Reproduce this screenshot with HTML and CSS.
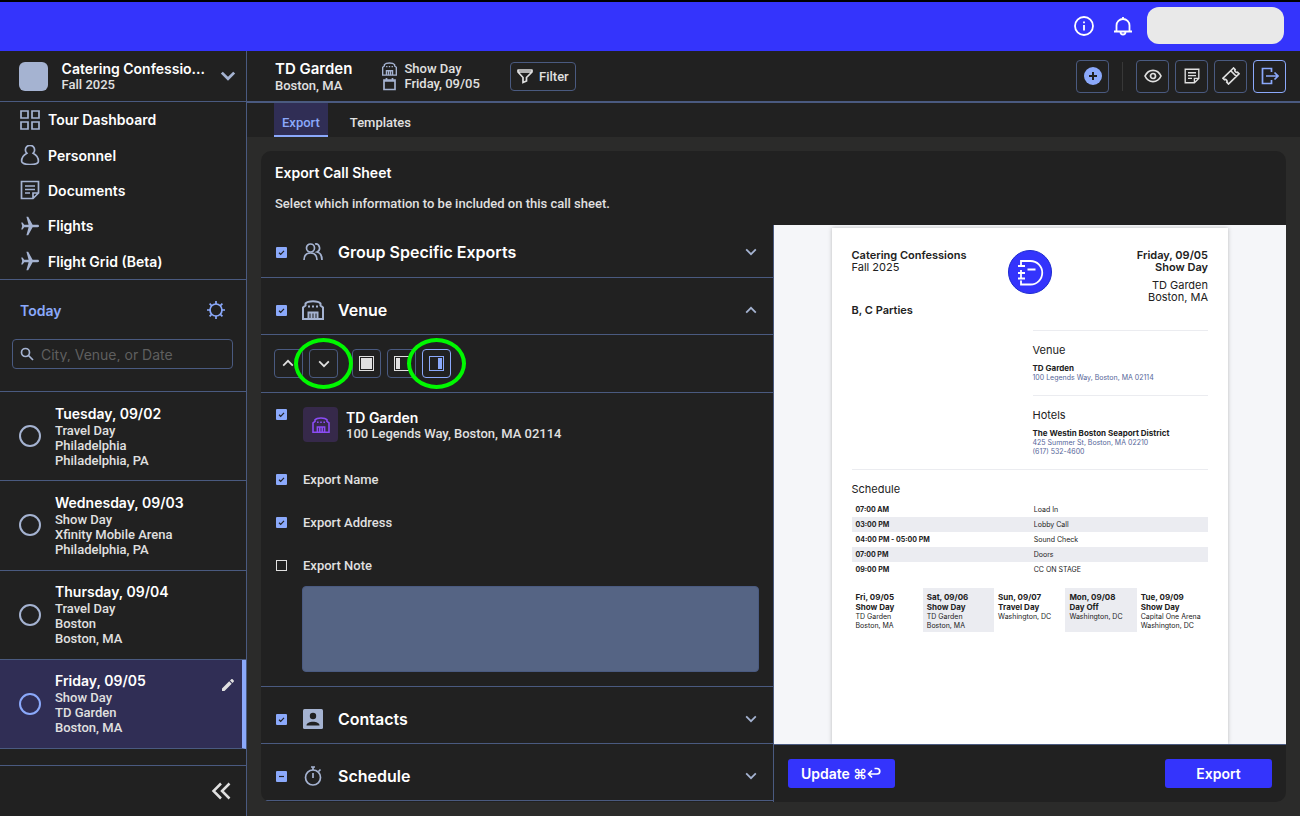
FILE: index.html
```html
<!DOCTYPE html>
<html lang="en">

<head>
    <meta charset="UTF-8">
    <meta name="viewport" content="width=device-width, initial-scale=1.0">
    <title>Export Call Sheet - TD Garden</title>
    <link rel="stylesheet" href="styles.css">
</head>

<body>
    <!-- shared icons -->
    <svg class="sprite" aria-hidden="true">
        <symbol id="i-chevron" viewBox="0 0 16 16"><path d="M2.5 5L8 10.500l5.500-5.500"/></symbol>
        <symbol id="i-plane" viewBox="0 0 20 20"><path class="solid" d="M19 10c0-.8-.6-1.200-1.400-1.200h-5L8.200.8H6.400l2.200 8H4.200L2.600 6.600H1.200L2.200 10l-1 3.400h1.400l1.600-2.200h4.400l-2.200 8h1.800l4.400-8h5c.8 0 1.400-.4 1.400-1.200z"/></symbol>
        <symbol id="i-note" viewBox="0 0 20 20"><path d="M1.500 1.500h17v11.500l-5.500 5.500H1.500zM18.500 13h-5.500v5.500M5 6h10M5 9.500h10M5 13h5"/></symbol>
        <symbol id="i-arena" viewBox="0 0 22 20"><path d="M1 19V7.500l2.500-2V3.500C6 .5 16 .5 18.500 3.500v2l2.500 2V19zM6.500 19v-6.500h9V19M9.500 13v6M12.500 13v6"/><path d="M6 6.500h2M10 6.500h2M14 6.500h2"/></symbol>
    </svg>

    <header class="topbar">
        <button class="topbar-btn" aria-label="Information">
            <svg class="icon" width="20" height="20" viewBox="0 0 20 20"><circle cx="10" cy="10" r="9"/><path d="M10 9v5.500M10 5.500v1.800"/></svg>
        </button>
        <button class="topbar-btn" aria-label="Notifications">
            <svg class="icon" width="20" height="20" viewBox="0 0 20 20"><path d="M1 15.500h18M3.500 15.500V9.500a6.500 6.500 0 0 1 13 0v6M10 3V1M7.500 16a2.500 2.500 0 0 0 5 0"/></svg>
        </button>
        <div class="account"></div>
    </header>

    <div class="layout">
        <aside class="sidebar">
            <button class="tour">
                <span class="tour-logo"></span>
                <span class="tour-text">
                    <strong>Catering Confessio...</strong>
                    <span>Fall 2025</span>
                </span>
                <svg class="icon thick" width="18" height="18"><use href="#i-chevron"/></svg>
            </button>

            <nav class="menu">
                <a href="#"><svg class="icon" width="20" height="20" viewBox="0 0 20 20"><path d="M1 1h7v7H1zM12 1h7v7h-7zM1 12h7v7H1zM12 12h7v7h-7z"/></svg>Tour Dashboard</a>
                <a href="#"><svg class="icon" width="20" height="20" viewBox="0 0 20 20"><path d="M6.800 8.200a4.600 4.600 0 1 1 6.400 0c3 1.600 5.200 5 5.200 8 0 2-3.400 3.300-8.400 3.300s-8.400-1.300-8.400-3.300c0-3 2.200-6.400 5.200-8z"/></svg>Personnel</a>
                <a href="#"><svg class="icon" width="20" height="20"><use href="#i-note"/></svg>Documents</a>
                <a href="#"><svg class="icon" width="20" height="20"><use href="#i-plane"/></svg>Flights</a>
                <a href="#"><svg class="icon" width="20" height="20"><use href="#i-plane"/></svg>Flight Grid (Beta)</a>
            </nav>

            <section class="finder">
                <div class="finder-head">
                    <a href="#">Today</a>
                    <button aria-label="Theme">
                        <svg class="icon" width="18" height="18" viewBox="0 0 18 18"><circle cx="9" cy="9" r="6"/><path d="M9 0v3M9 15v3M0 9h3M15 9h3M2.600 2.600l2 2M13.400 13.400l2 2M2.600 15.400l2-2M13.400 4.600l2-2"/></svg>
                    </button>
                </div>
                <div class="search">
                    <svg class="icon" width="14" height="14" viewBox="0 0 14 14"><circle cx="5.500" cy="5.500" r="4"/><path d="M8.500 8.500L13 13"/></svg>
                    <input type="text" aria-label="Search dates" placeholder="City, Venue, or Date">
                </div>
            </section>

            <ul class="days">
                <li class="day">
                    <span class="day-dot"></span>
                    <div><strong>Tuesday, 09/02</strong><p>Travel Day</p><p>Philadelphia</p><p>Philadelphia, PA</p></div>
                </li>
                <li class="day">
                    <span class="day-dot"></span>
                    <div><strong>Wednesday, 09/03</strong><p>Show Day</p><p>Xfinity Mobile Arena</p><p>Philadelphia, PA</p></div>
                </li>
                <li class="day">
                    <span class="day-dot"></span>
                    <div><strong>Thursday, 09/04</strong><p>Travel Day</p><p>Boston</p><p>Boston, MA</p></div>
                </li>
                <li class="day active">
                    <span class="day-dot"></span>
                    <div><strong>Friday, 09/05</strong><p>Show Day</p><p>TD Garden</p><p>Boston, MA</p></div>
                    <button class="edit" aria-label="Edit day">
                        <svg width="12" height="12" viewBox="0 0 12 12"><path fill="#e0e0e0" d="M0 9.500L7.200 2.300l2.500 2.500L2.500 12H0zM8 1.500L9.300.3c.4-.4.900-.4 1.300 0l1.100 1.100c.4.4.4.900 0 1.300L10.500 4z"/></svg>
                    </button>
                </li>
            </ul>

            <div class="sidebar-foot">
                <button aria-label="Collapse sidebar">
                    <svg class="icon thick" width="20" height="18" viewBox="0 0 20 18"><path d="M10 1.500L2.500 9l7.500 7.500M18.500 1.500L11 9l7.500 7.500"/></svg>
                </button>
            </div>
        </aside>

        <main class="main">
            <div class="event-bar">
                <div class="event-name">
                    <h1>TD Garden</h1>
                    <p>Boston, MA</p>
                </div>
                <div class="event-info">
                    <p><svg class="icon arena" width="15" height="14"><use href="#i-arena"/></svg>Show Day</p>
                    <p><svg class="icon" width="15" height="14" viewBox="0 0 15 14"><path d="M2 3h11v9.500H2zM2 4h11M4.500 1v2M10.500 1v2"/></svg>Friday, 09/05</p>
                </div>
                <button class="filter">
                    <svg class="icon" width="16" height="16" viewBox="0 0 16 16"><path d="M1 2h14M1.500 4h13M1 1.500v2.500l5 5.500v5l3.500-1.500V9.500l5.500-5.500V1.500"/></svg>
                    Filter
                </button>
                <div class="actions">
                    <button aria-label="Add">
                        <svg width="18" height="18" viewBox="0 0 18 18"><circle cx="9" cy="9" r="9" fill="#8ba9fb"/><path d="M9 5v8M5 9h8" stroke="#212121" stroke-width="2"/></svg>
                    </button>
                    <span class="divider"></span>
                    <button aria-label="Preview">
                        <svg class="icon" width="18" height="18" viewBox="0 0 18 18"><path d="M1 9C4.500 1.500 13.500 1.500 17 9 13.500 16.500 4.500 16.500 1 9z"/><circle cx="9" cy="9" r="2.500"/></svg>
                    </button>
                    <button aria-label="Notes"><svg class="icon" width="16" height="16"><use href="#i-note"/></svg></button>
                    <button aria-label="Tickets">
                        <svg class="icon" width="18" height="18" viewBox="0 0 18 18"><path d="M11.500 1L1 11.200l1.500 1.500c1.300-.8 3.200 1 2.300 2.500L6.500 17 17 6.800l-1.500-1.600c-1.500.7-3.200-1-2.400-2.500zM9 4l5.500 5.500"/></svg>
                    </button>
                    <button class="on" aria-label="Export">
                        <svg class="icon" width="18" height="18" viewBox="0 0 18 18"><path d="M10.500 5V1.500h-9v15h9V13M5 9h12M13.500 5.500L17 9l-3.500 3.500"/></svg>
                    </button>
                </div>
            </div>

            <nav class="tabs">
                <a href="#" class="active">Export</a>
                <a href="#">Templates</a>
            </nav>

            <div class="card">
                <div class="card-head">
                    <h2>Export Call Sheet</h2>
                    <p>Select which information to be included on this call sheet.</p>
                </div>

                <div class="options">
                    <div class="section-row first">
                        <input type="checkbox" id="c-group" checked>
                        <svg class="icon" width="22" height="20" viewBox="0 0 22 20"><circle cx="8.500" cy="6" r="4"/><path d="M2 18c0-4 1.500-7 6.500-7s6.500 3 6.500 7M13 2c4.500-.8 6.500 6 2 8 3.500.8 5 3.500 5 8"/></svg>
                        <label for="c-group">Group Specific Exports</label>
                        <button aria-label="Expand"><svg class="icon" width="14" height="14"><use href="#i-chevron"/></svg></button>
                    </div>
                    <div class="section-row">
                        <input type="checkbox" id="c-venue" checked>
                        <svg class="icon arena" width="22" height="20"><use href="#i-arena"/></svg>
                        <label for="c-venue">Venue</label>
                        <button class="up" aria-label="Collapse"><svg class="icon" width="14" height="14"><use href="#i-chevron"/></svg></button>
                    </div>

                    <div class="toolbar">
                        <button class="up" aria-label="Move up"><svg class="icon" width="14" height="14"><use href="#i-chevron"/></svg></button>
                        <button class="marked" aria-label="Move down"><svg class="icon" width="14" height="14"><use href="#i-chevron"/></svg></button>
                        <span class="gap"></span>
                        <button aria-label="Full width"><span class="pane full"></span></button>
                        <button aria-label="Left half"><span class="pane left"></span></button>
                        <button class="on marked" aria-label="Right half"><span class="pane right"></span></button>
                    </div>

                    <div class="venue">
                        <div class="venue-row place">
                            <input type="checkbox" id="c-td" checked>
                            <span class="venue-icon"><svg class="icon arena" width="18" height="16"><use href="#i-arena"/></svg></span>
                            <label for="c-td"><strong>TD Garden</strong><span>100 Legends Way, Boston, MA 02114</span></label>
                        </div>
                        <div class="venue-row">
                            <input type="checkbox" id="c-name" checked>
                            <label for="c-name">Export Name</label>
                        </div>
                        <div class="venue-row">
                            <input type="checkbox" id="c-address" checked>
                            <label for="c-address">Export Address</label>
                        </div>
                        <div class="venue-row">
                            <input type="checkbox" id="c-note">
                            <label for="c-note">Export Note</label>
                        </div>
                        <textarea aria-label="Note"></textarea>
                    </div>

                    <div class="section-row">
                        <input type="checkbox" id="c-contacts" checked>
                        <svg width="22" height="20" viewBox="0 0 22 20"><rect x="1" width="20" height="20" rx="1.500" fill="#a5b3d1"/><circle cx="11" cy="7" r="3.200" fill="#212121"/><path d="M4.500 16.500c0-5 13-5 13 0z" fill="#212121"/></svg>
                        <label for="c-contacts">Contacts</label>
                        <button aria-label="Expand"><svg class="icon" width="14" height="14"><use href="#i-chevron"/></svg></button>
                    </div>
                    <div class="section-row">
                        <input type="checkbox" id="c-schedule" class="partial" checked>
                        <svg class="icon" width="22" height="20" viewBox="0 0 22 20"><circle cx="11" cy="11.500" r="7.500"/><path d="M11 7v5M9 1h4M11 1v3M16.500 5.500l2-2"/></svg>
                        <label for="c-schedule">Schedule</label>
                        <button aria-label="Expand"><svg class="icon" width="14" height="14"><use href="#i-chevron"/></svg></button>
                    </div>
                </div>

                <div class="preview">
                    <article class="sheet">
                        <div class="sheet-head">
                            <div>
                                <strong>Catering Confessions</strong>
                                <p>Fall 2025</p>
                            </div>
                            <svg width="46" height="46" viewBox="0 0 46 46"><circle cx="23" cy="23" r="21.500" fill="#3434fc" stroke="#1c2ad0"/><path fill="none" stroke="#fff" stroke-width="1.800" d="M14 16v-4h9.500a11 11 0 0 1 0 23.500H14v-4M11 17h7M14 21v6M11 24h7M11 29.500h7M14 29.500v-3M20.500 20.500h8"/></svg>
                            <div class="sheet-date">
                                <strong>Friday, 09/05</strong>
                                <strong>Show Day</strong>
                                <p class="spaced">TD Garden</p>
                                <p>Boston, MA</p>
                            </div>
                        </div>
                        <strong class="parties">B, C Parties</strong>

                        <div class="sheet-half">
                            <h3>Venue</h3>
                            <strong>TD Garden</strong>
                            <p>100 Legends Way, Boston, MA 02114</p>
                        </div>
                        <div class="sheet-half">
                            <h3>Hotels</h3>
                            <strong>The Westin Boston Seaport District</strong>
                            <p>425 Summer St, Boston, MA 02210</p>
                            <p>(617) 532-4600</p>
                        </div>

                        <div class="sheet-schedule">
                            <h3>Schedule</h3>
                            <table>
                                <tr><th>07:00 AM</th><td>Load In</td></tr>
                                <tr><th>03:00 PM</th><td>Lobby Call</td></tr>
                                <tr><th>04:00 PM - 05:00 PM</th><td>Sound Check</td></tr>
                                <tr><th>07:00 PM</th><td>Doors</td></tr>
                                <tr><th>09:00 PM</th><td>CC ON STAGE</td></tr>
                            </table>
                        </div>

                        <div class="week">
                            <div><strong>Fri, 09/05</strong><strong>Show Day</strong><p>TD Garden</p><p>Boston, MA</p></div>
                            <div><strong>Sat, 09/06</strong><strong>Show Day</strong><p>TD Garden</p><p>Boston, MA</p></div>
                            <div><strong>Sun, 09/07</strong><strong>Travel Day</strong><p>Washington, DC</p></div>
                            <div><strong>Mon, 09/08</strong><strong>Day Off</strong><p>Washington, DC</p></div>
                            <div><strong>Tue, 09/09</strong><strong>Show Day</strong><p>Capital One Arena</p><p>Washington, DC</p></div>
                        </div>
                    </article>
                </div>

                <div class="card-foot">
                    <button class="btn">Update ⌘<svg class="icon" width="14" height="14" viewBox="0 0 14 14"><path d="M5 3.500L1.500 7 5 10.500M1.500 7H10a2.700 2.700 0 0 0 0-5.500H7.500"/></svg></button>
                    <button class="btn">Export</button>
                </div>
            </div>
        </main>
    </div>
</body>

</html>
```

FILE: styles.css
```css
* {
    box-sizing: border-box;
}

body {
    margin: 0;
    min-height: 100vh;
    display: flex;
    flex-direction: column;
    background: #2b2b2a;
    color: #e0e0e0;
    font-family: Roboto, "Liberation Sans", sans-serif;
    font-size: 13px;
    font-weight: 500;
    line-height: 15px;
}

h1, h2, h3, p, ul {
    margin: 0;
    padding: 0;
    font-weight: inherit;
}

strong {
    display: block;
    font-weight: 600;
}

/* titles and the printed sheet */
strong,
h1,
h2,
.menu,
.finder,
.section-row,
.sheet,
.btn {
    font-family: Inter, "Liberation Sans", sans-serif;
}

a {
    color: inherit;
    text-decoration: none;
}

button {
    display: flex;
    align-items: center;
    justify-content: center;
    padding: 0;
    border: none;
    background: none;
    color: inherit;
    font: inherit;
    cursor: pointer;
}

svg {
    flex: none;
}

.sprite {
    position: absolute;
    width: 0;
    height: 0;
}

.icon {
    fill: none;
    stroke: currentColor;
    stroke-width: 1.7;
}

.icon.arena {
    stroke-width: 2;
}

.icon.thick {
    stroke-width: 2.5;
}

.solid {
    fill: currentColor;
    stroke: none;
}

/* top bar */
.topbar {
    display: flex;
    align-items: center;
    justify-content: flex-end;
    gap: 19px;
    height: 51px;
    padding: 0 16px 2px 0;
    border-top: 2px solid #000;
    background: #3434fc;
    color: #fff;
}

.topbar .icon {
    stroke-width: 1.8;
}

.account {
    width: 137px;
    height: 37px;
    margin-left: -5px;
    border-radius: 12px;
    background: #e9e9e9;
}

.layout {
    display: flex;
    flex: 1;
}

/* sidebar */
.sidebar {
    display: flex;
    flex-direction: column;
    flex: none;
    width: 247px;
    border-right: 1px solid #4a5a80;
    background: #212121;
}

.tour {
    gap: 14px;
    height: 51px;
    padding: 0 9px 0 19px;
    border-bottom: 1px solid #4a5a80;
    text-align: left;
}

.tour-logo {
    width: 29px;
    height: 29px;
    border-radius: 6px;
    background: #a5b3d1;
}

.tour-text {
    flex: 1;
    padding-top: 1px;
    line-height: 16px;
    white-space: nowrap;
}

.tour-text strong {
    color: #fff;
    font-size: 14px;
}

.tour .icon {
    color: #a5b3d1;
}

.menu {
    display: grid;
    grid-auto-rows: 1fr;
    min-height: 178px;
    border-bottom: 1px solid #4a5a80;
    color: #fff;
    font-size: 14px;
    font-weight: 600;
}

.menu a {
    display: flex;
    align-items: center;
    gap: 8px;
    padding-left: 20px;
}

.menu .icon {
    color: #a5b3d1;
}

.finder {
    height: 112px;
    padding: 19px 12px 0;
    border-bottom: 1px solid #4a5a80;
}

.finder-head {
    display: flex;
    align-items: center;
    justify-content: space-between;
    height: 22px;
    padding: 0 9px 0 8px;
    color: #8ba9fb;
    font-size: 14px;
    font-weight: 600;
}

.search {
    display: flex;
    align-items: center;
    gap: 7px;
    height: 30px;
    margin: 18px 1px 0 0;
    padding-left: 7px;
    border: 1px solid #4a5a80;
    border-radius: 4px;
}

.search input {
    flex: 1;
    min-width: 0;
    padding: 0;
    border: none;
    outline: none;
    background: none;
    color: #e0e0e0;
    font: inherit;
    font-size: 14px;
    font-weight: 400;
}

.search input::placeholder {
    color: #5f5f5f;
}

.search .icon {
    color: #a5b3d1;
}

.days {
    display: grid;
    grid-auto-rows: 1fr;
    min-height: 357px;
    list-style: none;
}

.day {
    display: flex;
    align-items: center;
    gap: 14px;
    padding-left: 19px;
    border-bottom: 1px solid #4a5a80;
}

.day strong {
    color: #fff;
    font-size: 14px;
    line-height: 18px;
}

.day-dot {
    width: 22px;
    height: 22px;
    border: 2px solid #a5b3d1;
    border-radius: 50%;
}

.day.active {
    border-right: 4px solid #8ba9fb;
    background: #302e55;
}

.day.active .day-dot {
    border-color: #8ba9fb;
}

.edit {
    align-self: flex-start;
    margin: 19px 8px 0 auto;
}

.sidebar-foot {
    display: flex;
    flex: 1;
    align-items: center;
    justify-content: flex-end;
    margin-top: 16px;
    padding-right: 15px;
    border-top: 1px solid #4a5a80;
}

/* main column */
.main {
    display: flex;
    flex: 1;
    flex-direction: column;
    min-width: 0;
}

.event-bar {
    display: flex;
    align-items: center;
    height: 52px;
    padding: 0 14px 0 28px;
    border-bottom: 2px solid #4a5a80;
    background: #212121;
}

.event-name {
    margin-right: 30px;
}

.event-name h1 {
    color: #fff;
    font-size: 15px;
    font-weight: 600;
    line-height: 18px;
}

.event-info p {
    display: flex;
    align-items: center;
    gap: 7px;
}

.event-info .icon {
    color: #a5b3d1;
}

.filter {
    gap: 6px;
    width: 66px;
    height: 29px;
    margin-left: 30px;
    border: 1px solid #4a5a80;
    border-radius: 4px;
}

.actions {
    display: flex;
    gap: 6px;
    margin-left: auto;
}

.actions button {
    width: 33px;
    height: 33px;
    border: 1px solid #4a5a80;
    border-radius: 4px;
}

.actions .on {
    border-color: #8ba9fb;
    color: #8ba9fb;
}

.divider {
    width: 1px;
    margin: 2px 7px;
    background: #383838;
}

.tabs {
    display: flex;
    gap: 14px;
    height: 34px;
    padding-left: 27px;
    background: #212121;
}

.tabs a {
    padding: 12px 8px 0;
}

.tabs .active {
    border-bottom: 2px solid #8ba9fb;
    background: #302e55;
    color: #8ba9fb;
}

.card {
    display: grid;
    flex: 1;
    grid-template-columns: 1fr 1fr;
    grid-template-rows: 74px 1fr 58px;
    margin: 14px;
    border-radius: 10px;
    overflow: hidden;
    background: #212121;
}

.card-head {
    grid-column: 1 / 3;
    padding: 14px;
}

.card-head h2 {
    margin-bottom: 15px;
    color: #fff;
    font-size: 14px;
    font-weight: 600;
    line-height: 16px;
}

/* options column */
.options {
    grid-row: 2 / 4;
    border-right: 1px solid #4a5a80;
}

input[type="checkbox"] {
    appearance: none;
    flex: none;
    width: 11px;
    height: 11px;
    margin: 0;
    border: 1px solid #e0e0e0;
}

input[type="checkbox"]:checked {
    border: none;
    border-radius: 1px;
    background: #8ba9fb url('data:image/svg+xml,<svg xmlns="http://www.w3.org/2000/svg" viewBox="0 0 11 11"><path d="M3 5.700l1.700 1.600L8 3.900" fill="none" stroke="%23212121" stroke-width="1.200"/></svg>');
}

input[type="checkbox"].partial {
    background-image: url('data:image/svg+xml,<svg xmlns="http://www.w3.org/2000/svg" viewBox="0 0 11 11"><path d="M3 5.500h5" stroke="%23212121" stroke-width="1.200"/></svg>');
}

.section-row {
    display: flex;
    align-items: center;
    height: 57px;
    padding: 8px 15px 0;
    border-bottom: 1px solid #4a5a80;
}

.section-row.first {
    height: 53px;
    padding-top: 2px;
}

.section-row svg {
    color: #a5b3d1;
}

.section-row > svg {
    margin: 0 14px 0 15px;
}

.section-row label {
    flex: 1;
    color: #fff;
    font-size: 16px;
    font-weight: 600;
}

.section-row button .icon {
    stroke-width: 2;
}

.up {
    transform: rotate(180deg);
}

.toolbar {
    display: flex;
    align-items: center;
    gap: 6px;
    height: 58px;
    padding-left: 13px;
    border-bottom: 1px solid #4a5a80;
}

.toolbar button {
    position: relative;
    width: 29px;
    height: 29px;
    border: 1px solid #4a5a80;
    border-radius: 4px;
}

.toolbar .icon {
    stroke-width: 2;
}

.toolbar .on {
    border-color: #8ba9fb;
    color: #8ba9fb;
}

.toolbar .gap {
    width: 2px;
}

.toolbar .marked::after {
    content: "";
    position: absolute;
    z-index: 1;
    inset: -12px -16px;
    border: 4px solid #00f800;
    border-radius: 50%;
}

.pane {
    width: 15px;
    height: 15px;
    padding: 1px;
    border: 1px solid currentColor;
    background: currentColor content-box;
}

.pane.left {
    padding-right: 8px;
}

.pane.right {
    padding-left: 8px;
}

.venue {
    padding: 14px 14px 14px 15px;
    border-bottom: 1px solid #4a5a80;
}

.venue-row {
    display: flex;
    align-items: center;
    gap: 16px;
    margin-bottom: 28px;
}

.venue-row.place {
    align-items: flex-start;
    margin-bottom: 30px;
}

.place input {
    margin-top: 2px;
}

.place label {
    margin: 2px 0 0 -8px;
}

.place label span {
    display: block;
}

.place strong {
    color: #fff;
    font-size: 14px;
    line-height: 17px;
}

.venue-icon {
    display: flex;
    align-items: center;
    justify-content: center;
    width: 35px;
    height: 35px;
    border-radius: 4px;
    background: #36294a;
    color: #8b4cf5;
}

.venue textarea {
    display: block;
    width: calc(100% - 26px);
    height: 86px;
    margin: -15px 0 0 26px;
    border: 1px solid #4a5a80;
    border-radius: 4px;
    background: #556484;
    resize: none;
}

/* call sheet preview */
.preview {
    padding: 3px 58px 0;
    overflow: hidden;
    background: #f5f6f9;
}

.sheet {
    height: 100%;
    padding: 21px 20px 0;
    background: #fff;
    box-shadow: 0 0 4px rgba(0, 0, 0, 0.25);
    color: #212121;
    font-size: 11px;
    font-weight: 400;
    line-height: 12px;
}

.sheet-head {
    display: grid;
    grid-template-columns: 1fr 46px 1fr;
    min-height: 55px;
}

.sheet-date {
    text-align: right;
}

.sheet-date .spaced {
    margin-top: 6px;
}

.sheet .parties {
    margin-bottom: 14px;
}

.sheet-half {
    margin-left: 181px;
    padding: 13px 0;
    border-top: 1px solid #ebecf0;
    font-size: 7px;
    line-height: 9px;
}

.sheet h3 {
    margin-bottom: 7px;
    font-size: 11px;
    line-height: 12px;
}

.sheet-half p {
    color: #556699;
}

.sheet-half strong,
.week strong {
    font-size: 8px;
    font-weight: 700;
    line-height: 10px;
}

.sheet-schedule {
    padding-top: 13px;
    border-top: 1px solid #ebecf0;
}

.sheet table {
    width: 100%;
    border-collapse: collapse;
    table-layout: fixed;
    font-size: 7px;
}

.sheet th,
.sheet td {
    height: 15px;
    padding: 0 4px;
    text-align: left;
    font-weight: 400;
}

.sheet th {
    font-weight: 700;
}

.sheet tr:nth-child(even),
.week div:nth-child(even) {
    background: #ebecf1;
}

.week {
    display: grid;
    grid-template-columns: repeat(5, 1fr);
    margin-top: 11px;
    font-size: 7px;
    line-height: 9px;
}

.week div {
    padding: 4px 0 2px 4px;
    white-space: nowrap;
}

.card-foot {
    display: flex;
    align-items: center;
    justify-content: space-between;
    padding: 0 14px;
    border-top: 1px solid #4a5a80;
}

.btn {
    width: 107px;
    height: 29px;
    border-radius: 3px;
    background: #3434fc;
    color: #fff;
    font-size: 14px;
    font-weight: 600;
}
```
